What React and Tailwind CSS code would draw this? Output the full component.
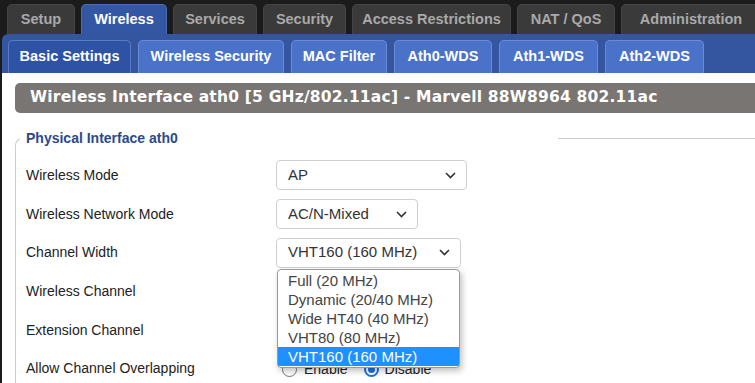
import React from 'react';

const tabs = ['Setup', 'Wireless', 'Services', 'Security', 'Access Restrictions', 'NAT / QoS', 'Administration'];
const tabWidths = ['w-[68px]', 'w-[86px]', 'w-[84px]', 'w-[83px]', 'w-[159px]', 'w-[98px]', 'w-[140px]'];
const subTabs = ['Basic Settings', 'Wireless Security', 'MAC Filter', 'Ath0-WDS', 'Ath1-WDS', 'Ath2-WDS'];
const subWidths = ['w-[123px]', 'w-[146px]', 'w-[96px]', 'w-[98px]', 'w-[99px]', 'w-[99px]'];
const widthOptions = ['Full (20 MHz)', 'Dynamic (20/40 MHz)', 'Wide HT40 (40 MHz)', 'VHT80 (80 MHz)', 'VHT160 (160 MHz)'];

const Chevron = () => (
  <svg width="11" height="7" viewBox="0 0 11 7" className="shrink-0">
    <path d="M1 1l4.5 4.5L10 1" fill="none" stroke="#333" strokeWidth="1.6" />
  </svg>
);

const Select = ({ value, width, children }) => (
  <div className={`relative ${width}`}>
    <div className="h-[30px] flex items-center justify-between pl-[11px] pr-[10px] border border-[#cfcfcf] rounded-[4px] bg-white text-[15px] text-[#333]">
      <span>{value}</span>
      <Chevron />
    </div>
    {children}
  </div>
);

const Row = ({ label, children }) => (
  <div className="h-[38.7px] flex items-center">
    <div className="w-[250px] text-[14px] text-[#222]">{label}</div>
    {children}
  </div>
);

const App = () => {
  return (
    <div className="w-[755px] h-[383px] overflow-hidden bg-[#1b1b1b] flex flex-col font-['Liberation_Sans',sans-serif]">
      {/* top tabs */}
      <div className="flex gap-[6px] pl-[7px] pt-[4px] h-[34px] shrink-0">
        {tabs.map((t, i) => (
          <div
            key={t}
            className={`${tabWidths[i]} shrink-0 h-[30px] rounded-t-[5px] flex items-center justify-center text-[14.5px] font-bold ${
              t === 'Wireless'
                ? 'bg-[#3457a3] text-white border-t border-x border-[#4a6bb5]'
                : 'bg-[#3a3a3a] text-[#a9a9a9] border-t border-x border-[#444]'
            }`}
          >
            {t}
          </div>
        ))}
      </div>

      {/* sub tabs */}
      <div className="ml-[2px] h-[39px] shrink-0 bg-[#3456a1] rounded-tl-[6px] flex gap-[7px] pl-[6px] pt-[6px]">
        {subTabs.map((t, i) => (
          <div
            key={t}
            className={`${subWidths[i]} shrink-0 h-[33px] rounded-t-[5px] flex items-center justify-center text-[14.5px] font-bold text-white border-t border-x ${
              i === 0 ? 'bg-[#2e52a4] border-[#5a7cc4]' : 'bg-[#4a72c8] border-[#6a8ad4]'
            }`}
          >
            {t}
          </div>
        ))}
      </div>

      {/* content */}
      <div className="ml-[2px] flex-1 bg-white pt-[10px] pl-[13px]">
        <div className="h-[30px] bg-[#787573] rounded-l-[5px] flex items-center pl-[15px] text-white text-[15.5px] font-bold tracking-[0.2px] font-['DejaVu_Sans',sans-serif] whitespace-nowrap">
          Wireless Interface ath0 [5 GHz/802.11ac] - Marvell 88W8964 802.11ac
        </div>

        <fieldset className="mt-[16px] border-l border-t border-[#cccccc] rounded-tl-[7px] pl-[10px]">
          <legend className="-ml-[6px] pl-[6px] w-[538px] text-[14px] font-bold text-[#2b4a8c] leading-[18px]">
            Physical Interface ath0
          </legend>
          <div className="mt-[9px]">
            <Row label="Wireless Mode">
              <Select value="AP" width="w-[191px]" />
            </Row>
            <Row label="Wireless Network Mode">
              <Select value="AC/N-Mixed" width="w-[142px]" />
            </Row>
            <Row label="Channel Width">
              <Select value="VHT160 (160 MHz)" width="w-[185px]">
                <div className="absolute z-10 left-[1px] top-[31px] w-[183px] bg-white border border-[#9a9a9a] rounded-[4px] overflow-hidden shadow-[2px_3px_6px_rgba(0,0,0,0.25)] text-[15px] text-[#444] leading-[19px] py-[1px]">
                  {widthOptions.map((o, i) => (
                    <div key={o} className={`pl-[10px] ${i === 4 ? 'bg-[#1e90ff] text-white' : ''}`}>
                      {o}
                    </div>
                  ))}
                </div>
              </Select>
            </Row>
            <Row label="Wireless Channel" />
            <Row label="Extension Channel" />
            <Row label="Allow Channel Overlapping">
              <div className="flex items-center text-[14px] text-[#222] mt-[2px] pl-[6px]">
                <span className="w-[15px] h-[15px] rounded-full border border-[#767676] bg-white" />
                <span className="ml-[7px]">Enable</span>
                <span className="ml-[16px] w-[15px] h-[15px] rounded-full border-2 border-[#1a73e8] bg-white flex items-center justify-center">
                  <span className="w-[7px] h-[7px] rounded-full bg-[#1a73e8]" />
                </span>
                <span className="ml-[6px]">Disable</span>
              </div>
            </Row>
          </div>
        </fieldset>
      </div>
    </div>
  );
};

export default App;
